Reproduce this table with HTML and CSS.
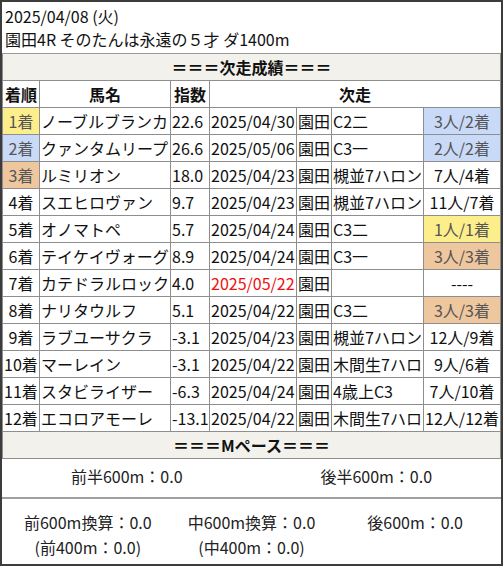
FILE: index.html
```html
<!DOCTYPE html>
<html lang="ja">
<head>
<meta charset="utf-8">
<title>次走成績</title>
<link rel="stylesheet" href="styles.css">
</head>
<body>
<div class="card">
  <div class="head">
    <div>2025/04/08 (火)</div>
    <div>園田4R そのたんは永遠の５才 ダ1400m</div>
  </div>
  <table class="res">
    <colgroup>
      <col class="c1"><col class="c2"><col class="c3"><col class="c4"><col class="c5"><col class="c6"><col class="c7">
    </colgroup>
    <tr class="bar"><td colspan="7">＝＝＝次走成績＝＝＝</td></tr>
    <tr class="hd"><th>着順</th><th>馬名</th><th>指数</th><th colspan="4">次走</th></tr>
    <tr><td class="pos p1">1着</td><td>ノーブルブランカ</td><td>22.6</td><td>2025/04/30</td><td>園田</td><td>C2二</td><td class="rs p2">3人/2着</td></tr>
    <tr><td class="pos p2">2着</td><td>クァンタムリープ</td><td>26.6</td><td>2025/05/06</td><td>園田</td><td>C3一</td><td class="rs p2">2人/2着</td></tr>
    <tr><td class="pos p3">3着</td><td>ルミリオン</td><td>18.0</td><td>2025/04/23</td><td>園田</td><td>槻並7ハロン</td><td class="rs">7人/4着</td></tr>
    <tr><td class="pos">4着</td><td>スエヒロヴァン</td><td>9.7</td><td>2025/04/23</td><td>園田</td><td>槻並7ハロン</td><td class="rs">11人/7着</td></tr>
    <tr><td class="pos">5着</td><td>オノマトペ</td><td>5.7</td><td>2025/04/24</td><td>園田</td><td>C3二</td><td class="rs p1">1人/1着</td></tr>
    <tr><td class="pos">6着</td><td>テイケイヴォーグ</td><td>8.9</td><td>2025/04/24</td><td>園田</td><td>C3一</td><td class="rs p3">3人/3着</td></tr>
    <tr><td class="pos">7着</td><td>カテドラルロック</td><td>4.0</td><td class="future">2025/05/22</td><td>園田</td><td></td><td class="rs">----</td></tr>
    <tr><td class="pos">8着</td><td>ナリタウルフ</td><td>5.1</td><td>2025/04/22</td><td>園田</td><td>C3二</td><td class="rs p3">3人/3着</td></tr>
    <tr><td class="pos">9着</td><td>ラブユーサクラ</td><td>-3.1</td><td>2025/04/23</td><td>園田</td><td>槻並7ハロン</td><td class="rs">12人/9着</td></tr>
    <tr><td class="pos">10着</td><td>マーレイン</td><td>-3.1</td><td>2025/04/22</td><td>園田</td><td>木間生7ハロ</td><td class="rs">9人/6着</td></tr>
    <tr><td class="pos">11着</td><td>スタビライザー</td><td>-6.3</td><td>2025/04/24</td><td>園田</td><td>4歳上C3</td><td class="rs">7人/10着</td></tr>
    <tr><td class="pos">12着</td><td>エコロアモーレ</td><td>-13.1</td><td>2025/04/22</td><td>園田</td><td>木間生7ハロ</td><td class="rs">12人/12着</td></tr>
    <tr class="bar"><td colspan="7">＝＝＝Mペース＝＝＝</td></tr>
  </table>
  <div class="pace">
    <div>前半600m：0.0</div>
    <div>後半600m：0.0</div>
  </div>
  <div class="pace3">
    <div>前600m換算：0.0<br>(前400m：0.0)</div>
    <div>中600m換算：0.0<br>(中400m：0.0)</div>
    <div>後600m：0.0</div>
  </div>
</div>
</body>
</html>
```

FILE: styles.css
```css
* { box-sizing: border-box; }
html, body { margin: 0; padding: 0; background: #fff; }
body {
  font-family: "Noto Sans CJK JP", "Noto Sans", sans-serif;
  font-size: 16px;
  color: #111;
}
.card {
  width: 503px;
  height: 566px;
  border: 2px solid #3c3c3c;
  overflow: hidden;
  display: flex;
  flex-direction: column;
}
.head {
  height: 51px;
  padding: 3px 3px 0;
  line-height: 23px;
}
.res {
  width: 100%;
  border-collapse: collapse;
  table-layout: fixed;
}
.c1 { width: 37px; }
.c2 { width: 131px; }
.c3 { width: 39px; }
.c4 { width: 87px; }
.c5 { width: 35px; }
.c6 { width: 92px; }
.res td, .res th {
  border: 1px solid #8e8e8e;
  padding: 0 1px;
  height: 26px;
  line-height: 26px;
  white-space: nowrap;
  overflow: hidden;
  text-align: left;
}
.res tr:first-child td { border-top-color: #9a9a9a; }
.res th { text-align: center; font-weight: bold; background: #fff; }
.res .bar td {
  background: #f2f1ec;
  text-align: center;
  font-weight: bold;
}
.res td.pos, .res td.rs { text-align: center; padding: 0; }
.p1 { background: #fdee8c; color: #555; }
.p2 { background: #c9daf8; color: #555; }
.p3 { background: #eec79f; color: #555; }
.future { color: #f01010; }
.pace {
  height: 40px;
  border-bottom: 2px solid #a0a0a0;
  display: grid;
  grid-template-columns: 1fr 1fr;
  padding-top: 5px;
  line-height: 24px;
  text-align: center;
  color: #222;
}
.pace3 {
  flex: 1;
  display: grid;
  grid-template-columns: 1fr 1fr 1fr;
  padding: 11px 4px 0;
  line-height: 25px;
  text-align: center;
  color: #222;
}
```
